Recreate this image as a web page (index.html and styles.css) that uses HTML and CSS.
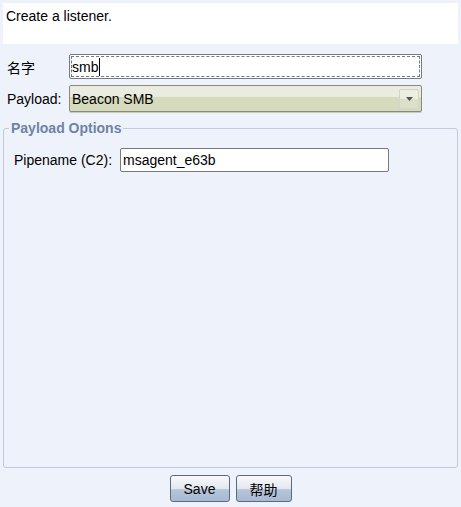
FILE: index.html
```html
<!DOCTYPE html>
<html>
<head>
<meta charset="utf-8">
<link rel="stylesheet" href="styles.css">
</head>
<body>
<div class="app">
  <div class="desc">Create a listener.</div>
  <div class="form">
    <div class="row">
      <label class="lbl">名字</label>
      <div class="input focused"><span class="val">smb</span><span class="caret"></span></div>
    </div>
    <div class="row">
      <label class="lbl">Payload:</label>
      <div class="select">
        <span class="val">Beacon SMB</span>
        <span class="arrowbtn"><svg width="7" height="4" viewBox="0 0 7 4"><path d="M0 0H7L3.5 4Z" fill="#555"/></svg></span>
      </div>
    </div>
  </div>
  <fieldset class="opts">
    <legend>Payload Options</legend>
    <div class="optrow">
      <label class="lbl2">Pipename (C2):</label>
      <div class="input small"><span class="val">msagent_e63b</span></div>
    </div>
  </fieldset>
  <div class="buttons">
    <button class="btn save">Save</button>
    <button class="btn help">帮助</button>
  </div>
</div>
</body>
</html>
```
FILE: styles.css
```css
html, body {
  margin: 0;
  padding: 0;
  background: #eef2fa;
}
body {
  font-family: "Liberation Sans", Arial, "Noto Sans CJK SC", sans-serif;
  font-size: 14px;
  color: #000;
}
.app {
  width: 461px;
  height: 507px;
  display: flex;
  flex-direction: column;
  padding: 3px 3px 0 3px;
  box-sizing: border-box;
}
.desc {
  background: #fff;
  height: 41px;
  padding: 5px 3px 0 3px;
  box-sizing: border-box;
  line-height: 16px;
}
.form {
  display: flex;
  flex-direction: column;
  gap: 7px;
  padding: 10px 0 0 4px;
}
.row {
  display: flex;
  align-items: center;
  height: 25px;
}
.lbl {
  width: 62px;
  flex: none;
}
.input {
  background: #fff;
  border: 1px solid #7a7a7a;
  border-radius: 2px;
  box-sizing: border-box;
  display: flex;
  align-items: center;
  padding-left: 2px;
  position: relative;
  font-size: 14px;
}
.row .input {
  width: 353px;
  height: 25px;
}
.input.focused::after {
  content: "";
  position: absolute;
  inset: 1px;
  border: 1px dashed #6a7a98;
  pointer-events: none;
}
.caret {
  display: inline-block;
  width: 1px;
  height: 18px;
  background: #000;
  margin-left: 1px;
}
.select {
  width: 353px;
  height: 27px;
  box-sizing: border-box;
  border: 1px solid #888a80;
  border-radius: 2px;
  background: linear-gradient(#e9ecde 0, #e9ecde 45%, #d6dbbd 45%, #d6dbbd 100%);
  display: flex;
  align-items: center;
  padding-left: 2px;
  font-size: 14px;
  box-shadow: 0 1px 0 #c9ccbe;
}
.select .val {
  flex: 1;
}
.arrowbtn {
  width: 20px;
  height: 20px;
  margin-right: 2px;
  border: 1px solid #d2d5c8;
  border-radius: 2px;
  box-sizing: border-box;
  background: linear-gradient(#eceee2 0, #eceee2 50%, #dde0c9 50%, #dde0c9 100%);
  display: flex;
  align-items: center;
  justify-content: center;
}
.opts {
  margin: 9px 0 0 0;
  height: 348px;
  box-sizing: border-box;
  border: 1px solid #c0cadb;
  border-radius: 3px;
  padding: 12px 0 0 5px;
}
.opts legend {
  font-weight: bold;
  color: #6e83a5;
  padding: 0 2px;
  margin-left: 0;
  font-size: 14px;
}
.optrow {
  display: flex;
  align-items: center;
  height: 24px;
  padding-left: 5px;
}
.lbl2 {
  width: 106px;
  flex: none;
}
.input.small {
  width: 269px;
  height: 24px;
}
.buttons {
  display: flex;
  justify-content: center;
  gap: 6px;
  margin-top: 7px;
}
.btn {
  font-family: "Liberation Sans", Arial, "Noto Sans CJK SC", sans-serif;
  font-size: 14px;
  height: 27px;
  box-sizing: border-box;
  border: 1px solid #5a6a80;
  border-radius: 3px;
  background: linear-gradient(#f8f9fb 0, #e2e8f0 50%, #b5c4d8 55%, #a8bad2 100%);
  padding: 0;
  color: #000;
}
.save { width: 60px; }
.help { width: 56px; }
```
